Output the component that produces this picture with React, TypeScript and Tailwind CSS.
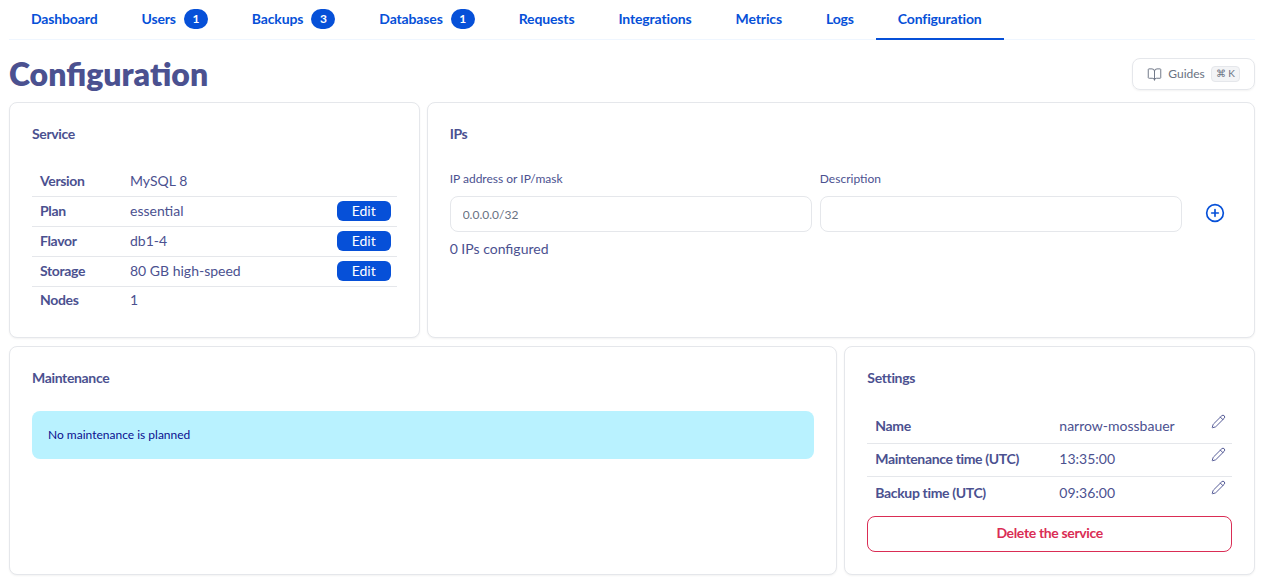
import { BookOpen, CirclePlus, Pencil } from "lucide-react";

const tabs = [
  { label: "Dashboard" },
  { label: "Users", badge: "1" },
  { label: "Backups", badge: "3" },
  { label: "Databases", badge: "1" },
  { label: "Requests" },
  { label: "Integrations" },
  { label: "Metrics" },
  { label: "Logs" },
  { label: "Configuration", active: true },
];

const service = [
  { label: "Version", value: "MySQL 8" },
  { label: "Plan", value: "essential", edit: true },
  { label: "Flavor", value: "db1-4", edit: true },
  { label: "Storage", value: "80 GB high-speed", edit: true },
  { label: "Nodes", value: "1" },
];

const settings = [
  { label: "Name", value: "narrow-mossbauer" },
  { label: "Maintenance time (UTC)", value: "13:35:00" },
  { label: "Backup time (UTC)", value: "09:36:00" },
];

function Card({ title, className, children }: { title: string; className?: string; children: React.ReactNode }) {
  return (
    <section className={`rounded-lg border border-gray-200 bg-white p-5.5 shadow-xs ${className ?? ""}`}>
      <h2 className="mb-6 text-sm leading-4.5 font-bold tracking-tight">{title}</h2>
      {children}
    </section>
  );
}

export default function App() {
  return (
    <div className="min-h-screen bg-white pl-[9px] pr-3 text-sm text-[#4b5190] font-['Lato',sans-serif]">
      <nav className="flex h-10 border-b border-blue-50">
        {tabs.map((t) => (
          <a
            key={t.label}
            className={`flex h-10 items-center gap-2 px-5.5 font-bold tracking-[-0.01em] text-[#0650d8] ${t.active ? "border-b-2 border-[#0650d8]" : "pb-0.5"}`}
          >
            {t.label}
            {t.badge && (
              <span className="flex h-5 w-6 items-center justify-center rounded-full bg-[#0650d8] text-xs text-white">
                {t.badge}
              </span>
            )}
          </a>
        ))}
      </nav>

      <header className="flex h-15.5 items-center justify-between pt-1.5">
        <h1 className="text-[32px] font-extrabold">Configuration</h1>
        <button className="flex h-8 items-center gap-1.5 rounded-lg border border-gray-200 px-3.5 text-xs text-gray-500 shadow-xs">
          <BookOpen size={15} strokeWidth={1.5} />
          Guides
          <kbd className="rounded border border-gray-200 bg-gray-100 px-1 text-[10px] font-['Lato',sans-serif]">⌘ K</kbd>
        </button>
      </header>

      <main className="grid grid-cols-3 gap-x-1.75 gap-y-2">
        <Card title="Service">
          <div>
            {service.map((r) => (
              <div key={r.label} className="flex h-7.5 items-center border-b border-gray-200 pb-0.5 pl-2 pr-1.5 last:h-7 last:border-b-0">
                <span className="w-22.5 font-bold tracking-tight">{r.label}</span>
                <span className="flex-1">{r.value}</span>
                {r.edit && (
                  <button className="h-5 w-13.5 rounded-md bg-[#0650d8] text-sm text-white">Edit</button>
                )}
              </div>
            ))}
          </div>
        </Card>

        <Card title="IPs" className="col-span-2">
          <div className="flex gap-2">
            <label className="flex-1 pt-1 text-xs">
              <span className="mb-2.25 block">IP address or IP/mask</span>
              <input
                placeholder="0.0.0.0/32"
                className="h-9 w-full rounded-lg border border-gray-200 px-3 text-xs outline-none placeholder:text-gray-500"
              />
            </label>
            <label className="flex-1 pt-1 text-xs">
              <span className="mb-2.25 block">Description</span>
              <input className="h-9 w-full rounded-lg border border-gray-200 px-3 text-xs outline-none" />
            </label>
            <div className="flex w-10.5 items-end justify-center pb-2.25 pl-2 text-[#0650d8]">
              <CirclePlus size={20} strokeWidth={2} />
            </div>
          </div>
          <p className="mt-1.75">0 IPs configured</p>
        </Card>

        <Card title="Maintenance" className="col-span-2">
          <div className="rounded-lg bg-[#b9f2ff] px-4 py-4 text-xs text-[#0a0f8f]">No maintenance is planned</div>
        </Card>

        <Card title="Settings">
          <div>
            {settings.map((r) => (
              <div key={r.label} className="flex h-8.25 items-center border-b border-gray-200 pb-0.5 pl-2 pr-1.5 last:border-b-0">
                <span className="w-46 font-bold tracking-tight">{r.label}</span>
                <span className="flex-1">{r.value}</span>
                <Pencil size={15} strokeWidth={1.5} className="-mt-2.5" />
              </div>
            ))}
          </div>
          <button className="mt-1.5 h-9 w-full rounded-lg border border-[#da2d55] pb-0.5 font-bold tracking-tight text-[#da2d55]">
            Delete the service
          </button>
        </Card>
      </main>
    </div>
  );
}
